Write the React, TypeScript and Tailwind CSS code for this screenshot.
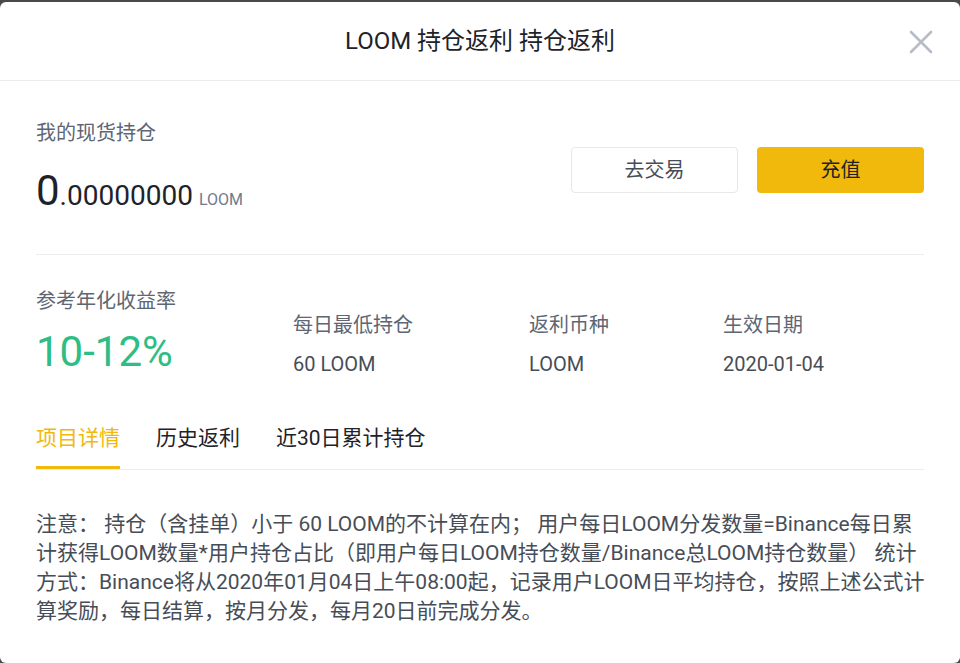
import React from 'react';

const font = { fontFamily: 'Roboto, "Noto Sans CJK SC", sans-serif' };

const Stat: React.FC<{ label: string; value: string; width: string }> = ({ label, value, width }) => (
  <div className={`${width} flex flex-col gap-3`}>
    <div className="text-[20px] leading-[28px] text-[#5e6673]">{label}</div>
    <div className="text-[20px] leading-[26px] text-[#474d57]">{value}</div>
  </div>
);

const App: React.FC = () => {
  const tabs = ['项目详情', '历史返利', '近30日累计持仓'];

  return (
    <div className="h-[663px] w-[960px] bg-[#4a4a4a] pt-[2px]" style={font}>
      <div className="h-[661px] rounded-[6px] bg-white overflow-hidden">
        {/* header */}
        <div className="relative h-[79px] flex items-center justify-center border-b border-[#eaecef]">
          <h1 className="text-[24px] text-[#1e2329]">LOOM 持仓返利 持仓返利</h1>
          <button className="absolute right-[26px] top-[27px] w-[26px] h-[26px] flex items-center justify-center">
            <svg width="24" height="24" viewBox="0 0 24 24" fill="none" stroke="#b7bdc6" strokeWidth="2.6" strokeLinecap="round">
              <path d="M2 2L22 22M22 2L2 22" />
            </svg>
          </button>
        </div>

        <div className="px-9">
          {/* spot holdings */}
          <div className="flex justify-between border-b border-[#eaecef] pb-[39px]">
            <div className="pt-[38px]">
              <div className="text-[20px] leading-[28px] text-[#5e6673]">我的现货持仓</div>
              <div className="mt-[20px] flex items-baseline h-[48px] text-[#1e2329]">
                <span className="text-[42px] leading-[48px]">0</span>
                <span className="text-[28px]">.00000000</span>
                <span className="ml-[6px] text-[16px] text-[#707a8a]">LOOM</span>
              </div>
            </div>
            <div className="pt-[66px] flex gap-[19px]">
              <button className="w-[167px] h-[46px] rounded-[4px] border border-[#e6e8ea] bg-white text-[20px] text-[#474d57]">
                去交易
              </button>
              <button className="w-[167px] h-[46px] rounded-[4px] bg-[#f0b90b] text-[20px] text-[#1e2329]">
                充值
              </button>
            </div>
          </div>

          {/* rebate stats */}
          <div className="flex items-end pt-[32px]">
            <div className="w-[257px]">
              <div className="text-[20px] leading-[28px] text-[#5e6673]">参考年化收益率</div>
              <div className="mt-[12px] text-[42px] leading-[50px] text-[#2ebd85]">10-12%</div>
            </div>
            <Stat label="每日最低持仓" value="60 LOOM" width="w-[236px]" />
            <Stat label="返利币种" value="LOOM" width="w-[194px]" />
            <Stat label="生效日期" value="2020-01-04" width="w-[180px]" />
          </div>

          {/* tabs */}
          <div className="mt-[47px] flex gap-9 border-b border-[#eaecef]">
            {tabs.map((t, i) => (
              <div key={t} className="flex flex-col">
                <span className={`text-[21px] leading-[28px] pb-[14px] ${i === 0 ? 'text-[#f0b90b]' : 'text-[#1e2329]'}`}>{t}</span>
                <span className={`h-[3px] ${i === 0 ? 'bg-[#f0b90b]' : 'bg-transparent'}`} />
              </div>
            ))}
          </div>

          {/* notice */}
          <p className="mt-[40px] whitespace-nowrap text-[21px] leading-[29px] text-[#474d57]">
            注意： 持仓（含挂单）小于 60 LOOM的不计算在内； 用户每日LOOM分发数量=Binance每日累
            <br />
            计获得LOOM数量*用户持仓占比（即用户每日LOOM持仓数量/Binance总LOOM持仓数量） 统计
            <br />
            方式：Binance将从2020年01月04日上午08:00起，记录用户LOOM日平均持仓，按照上述公式计
            <br />
            算奖励，每日结算，按月分发，每月20日前完成分发。
          </p>
        </div>
      </div>
    </div>
  );
};

export default App;
